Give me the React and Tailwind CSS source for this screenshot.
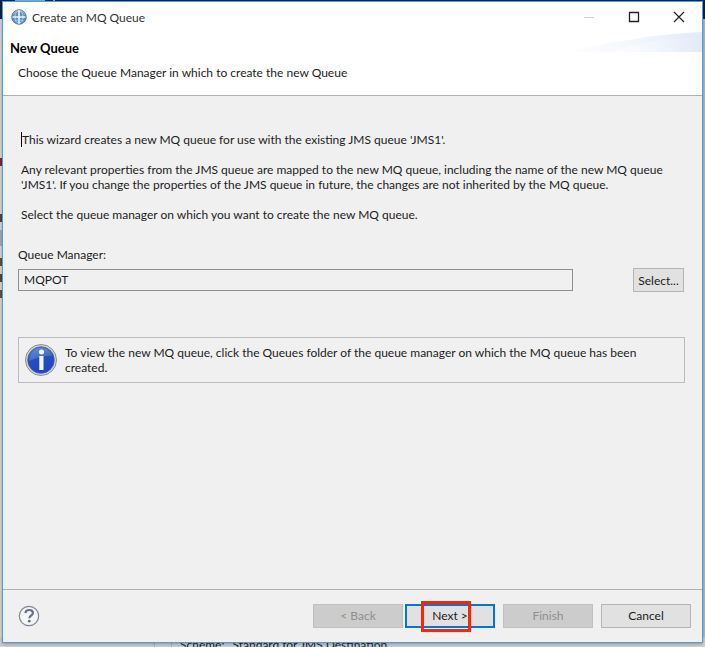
import { useId } from "react";

function GlobeIcon() {
  return (
    <svg viewBox="0 0 16 16" className="size-4 shrink-0" aria-hidden="true">
      <circle cx="8" cy="8" r="7.6" fill="#5c8fc0" />
      <circle cx="8" cy="8" r="7.2" fill="none" stroke="#4c7aa8" strokeWidth="0.8" />
      <path d="M2.2 5.5C4 2.4 6 1.6 8 1.6s4.2.8 5.8 3.9" fill="none" stroke="#a9c9e6" strokeWidth="1" />
      <ellipse cx="8" cy="8" rx="4" ry="6.2" fill="none" stroke="#bcd6ec" strokeWidth="0.9" />
      <path d="M8 1.5v13M1.5 8h13" stroke="#eaf4fc" strokeWidth="1.7" />
      <path d="M3.5 12c2.500-1.300 6.500-1.300 9 0" fill="none" stroke="#a9c9e6" strokeWidth="0.9" />
    </svg>
  );
}

function InfoIcon() {
  const id = useId();
  return (
    <svg viewBox="0 0 32 32" className="size-8 shrink-0" aria-hidden="true">
      <defs>
        <linearGradient id={id} x1="0" y1="0" x2="0.3" y2="1">
          <stop offset="0" stopColor="#5f8ee0" />
          <stop offset="0.5" stopColor="#2450b8" />
          <stop offset="1" stopColor="#1f45cc" />
        </linearGradient>
      </defs>
      <circle cx="16" cy="16" r="15.5" fill="#d6d6d6" stroke="#8c8c8c" />
      <circle cx="16" cy="16" r="13.3" fill={`url(#${id})`} stroke="#4d5f8c" strokeWidth="0.8" />
      <path d="M4 17C5 9 10 4 16 4s10 3 11.500 8C20 11 12 14 4 17Z" fill="#7da4ea" opacity="0.35" />
      <circle cx="16.500" cy="8" r="2.500" fill="#fff" />
      <path d="M14.300 12h4.200v14h-4.200z" fill="#f4f6fb" />
    </svg>
  );
}

function HelpIcon() {
  return (
    <svg viewBox="0 0 22 22" className="size-[22px]" aria-hidden="true">
      <circle cx="11" cy="11" r="9.7" fill="#f5f6f8" stroke="#7f8898" strokeWidth="1.2" />
      <path d="M7.400 8.200C7.600 6 9 5 11.200 5c2.300 0 3.700 1.200 3.700 2.900 0 2.400-3.500 2.500-3.500 5.300" fill="none" stroke="#65718a" strokeWidth="2.2" />
      <circle cx="11.300" cy="16.200" r="1.400" fill="#65718a" />
    </svg>
  );
}

function HeaderSwoosh() {
  const id = useId();
  return (
    <svg viewBox="0 0 142 20" className="ml-auto h-5 w-[142px]" aria-hidden="true">
      <defs>
        <linearGradient id={id}>
          <stop offset="0" stopColor="#ffffff" />
          <stop offset="0.5" stopColor="#f4f7fd" />
          <stop offset="1" stopColor="#e2e9f8" />
        </linearGradient>
      </defs>
      <path d="M0 20C40 13 90 2 142 0V20Z" fill={`url(#${id})`} />
      <path d="M50 20C80 10 110 6 142 6V20Z" fill={`url(#${id})`} opacity="0.7" />
    </svg>
  );
}

function Backdrop() {
  return (
    <div className="absolute inset-0 flex flex-col overflow-hidden bg-[#d2d3d5]" aria-hidden="true">
      <div className="flex h-[19px] shrink-0 bg-[#06234d]">
        <div className="ml-[15px] h-1 w-[30px] bg-[#9fb0c4]" />
        <div className="ml-2 h-1 w-[2px] bg-[#d9a520]" />
      </div>
      <div className="flex flex-1 justify-between">
        <div className="w-[2px] bg-[#dedede]">
          <div className="mt-[139px] h-2 bg-[#7b2447]" />
          <div className="mt-[48px] h-2 bg-[#44464c]" />
          <div className="mt-2 h-4 bg-[#a5b1bd]" />
          <div className="mt-3 h-2 bg-[#5d5344]" />
          <div className="mt-2 h-2 bg-[#4a4c52]" />
          <div className="mt-2 h-2 bg-[#5d5350]" />
        </div>
        <div className="w-[2px] bg-[#a9c4d8]" />
      </div>
      <p className="-mb-[6px] ml-[154px] flex h-4 shrink-0 items-center gap-2 whitespace-nowrap text-[12px] leading-4 text-[#222]">
        <span className="h-4 w-[18px] border-x border-[#b4b6c0]" />
        <span>Scheme:</span>
        <span>Standard for JMS Destination</span>
      </p>
    </div>
  );
}

const wizardButton =
  "h-6 w-[90px] border text-center text-[12px] leading-4 disabled:border-[#c0c0c0] disabled:bg-[#cccccc] disabled:text-[#8f8f8f]";

export default function App() {
  return (
    <div className="relative flex min-h-screen flex-col font-['Lato','Open_Sans',sans-serif] text-[12px] leading-[15px] text-[#1c1c1c]">
      <Backdrop />
      <main className="relative mx-[2px] mt-px mb-1 flex flex-1 flex-col border border-[#4a9fdf] bg-[#f0f0f0] shadow-[0_1px_4px_rgba(0,0,0,0.35)]">
        <header className="border-b border-[#b0b0b0] bg-white">
          <div className="flex h-[30px] items-center pl-2">
            <GlobeIcon />
            <h1 className="ml-[5px] flex-1 text-[12px] text-[#333]">Create an MQ Queue</h1>
            <button type="button" aria-label="Minimize" disabled className="flex h-full w-[45px] items-center justify-center">
              <svg viewBox="0 0 12 12" className="size-3"><path d="M1 6.500h10" stroke="#cfcfcf" /></svg>
            </button>
            <button type="button" aria-label="Maximize" className="flex h-full w-[45px] items-center justify-center">
              <svg viewBox="0 0 12 12" className="size-3"><path d="M1.500 1.500h9v9h-9z" fill="none" stroke="#222" strokeWidth="1.3" /></svg>
            </button>
            <button type="button" aria-label="Close" className="flex h-full w-[46px] items-center justify-center">
              <svg viewBox="0 0 12 12" className="size-3"><path d="M1 1l10 10M11 1L1 11" stroke="#222" strokeWidth="1.2" /></svg>
            </button>
          </div>
          <div className="grid h-[33px] grid-cols-[auto_1fr] items-start">
            <h2 className="pt-[9px] pl-[7px] text-[13px] font-bold text-black">New Queue</h2>
            <HeaderSwoosh />
          </div>
          <p className="pb-[15px] pl-[15px]">Choose the Queue Manager in which to create the new Queue</p>
        </header>

        <section className="flex-1 px-[15px] pt-9">
          <div className="space-y-[15px] pl-[3px]">
            <p className="border-l border-black">This wizard creates a new MQ queue for use with the existing JMS queue 'JMS1'.</p>
            <p>
              Any relevant properties from the JMS queue are mapped to the new MQ queue, including the name of the new MQ queue
              'JMS1'. If you change the properties of the JMS queue in future, the changes are not inherited by the MQ queue.
            </p>
            <p>Select the queue manager on which you want to create the new MQ queue.</p>
          </div>

          <label htmlFor="queue-manager" className="mt-[25px] block">Queue Manager:</label>
          <div className="mt-[6px] flex items-center justify-between pr-[3px]">
            <input
              id="queue-manager"
              readOnly
              value="MQPOT"
              className="mr-[60px] h-[22px] min-w-0 flex-1 border border-[#8f8f8f] bg-[#f0f0f0] px-[5px] pb-[2px] outline-none"
            />
            <button type="button" className="h-6 w-[51px] border border-[#b4b4b4] bg-[#e1e1e1]">Select...</button>
          </div>

          <div className="mt-[45px] mr-[2px] flex min-h-[46px] items-center border border-[#bcbcc0] pl-[6px]">
            <InfoIcon />
            <p className="ml-2 flex-1 pr-8">
              To view the new MQ queue, click the Queues folder of the queue manager on which the MQ queue has been created.
            </p>
          </div>
        </section>

        <footer className="flex h-[53px] items-center border-t border-[#b0b0b0] pr-[11px] pl-[15px]">
          <button type="button" aria-label="Help"><HelpIcon /></button>
          <div className="ml-auto flex items-center gap-2">
            <div className="flex gap-[2px]">
              <button type="button" disabled className={wizardButton}>&lt; Back</button>
              <div className="relative">
                <button type="button" className={`${wizardButton} border-[#0078d7] bg-[#e1e1e1] ring-1 ring-inset ring-[#0078d7]`}>Next &gt;</button>
                <span className="pointer-events-none absolute -top-[3px] left-4 h-[31px] w-[50px] border-3 border-[#fb2505]" />
              </div>
            </div>
            <button type="button" disabled className={wizardButton}>Finish</button>
            <button type="button" className={`${wizardButton} border-[#b4b4b4] bg-[#e1e1e1]`}>Cancel</button>
          </div>
        </footer>
      </main>
    </div>
  );
}
